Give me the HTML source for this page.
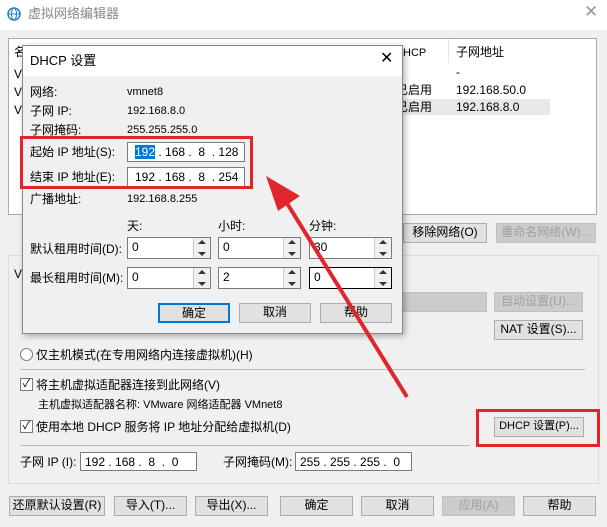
<!DOCTYPE html><html><head><meta charset="utf-8"><style>
*{box-sizing:border-box;margin:0;padding:0}
body{width:607px;height:527px;background:#f0f0f0;font:12px/16px "Liberation Sans","Noto Sans CJK SC",sans-serif;color:#000;position:relative;overflow:hidden}
.a{position:absolute;white-space:nowrap;line-height:16px}
.btn{position:absolute;background:#e1e1e1;border:1px solid #adadad;text-align:center;line-height:17px;white-space:nowrap;overflow:hidden}
.dis{color:#a0a0a0;background:#ccc;border-color:#bfbfbf}
.inp{position:absolute;background:#fff;border:1px solid #7a7a7a;line-height:18px;padding-left:4px;white-space:pre}
.rb{position:absolute;border:1px solid #7a7a7a}
.spin{position:absolute;width:17px;background:#f0f0f0;border-left:1px solid #ccc;right:0;top:0;bottom:0}
.spin:before,.spin:after{content:"";position:absolute;left:4px;border:4px solid transparent}
.spin:before{top:2px;border-bottom:4px solid #333;border-top:0}
.spin:after{bottom:2px;border-top:4px solid #333;border-bottom:0}
</style></head><body>
<div class="a" style="left:0;top:0;width:607px;height:30px;background:#fff"></div>
<svg class="a" style="left:7px;top:7px" width="14" height="14" viewBox="0 0 14 14"><circle cx="7" cy="7" r="6" fill="none" stroke="#1e7fc8" stroke-width="1.5"/><ellipse cx="7" cy="7" rx="2.5" ry="6" fill="none" stroke="#1e7fc8"/><line x1="1" y1="7" x2="13" y2="7" stroke="#1e7fc8"/></svg>
<div class="a" style="left:28px;top:6px;color:#888;font-size:13px">虚拟网络编辑器</div>
<div class="a" style="left:584px;top:4px;color:#999;font-size:17px">✕</div>
<div class="a" style="left:8px;top:38px;width:589px;height:177px;background:#fff;border:1px solid #aaa"></div>
<div class="a" style="left:398px;top:99px;width:152px;height:16px;background:#e8e8e8"></div>
<div class="a" style="left:403px;top:45px;font-size:11px">HCP</div><div class="a" style="left:456px;top:44px">子网地址</div>
<div class="a" style="left:456px;top:64px">-</div>
<div class="a" style="left:396px;top:82px">已启用</div><div class="a" style="left:456px;top:82px">192.168.50.0</div>
<div class="a" style="left:396px;top:99px">已启用</div><div class="a" style="left:456px;top:99px">192.168.8.0</div>
<div class="a" style="left:448px;top:39px;width:1px;height:24px;background:#e5e5e5"></div>
<div class="btn" style="left:403px;top:223px;width:84px;height:20px">移除网络(O)</div>
<div class="btn dis" style="left:496px;top:223px;width:100px;height:20px">重命名网络(W)...</div>
<div class="a" style="left:8px;top:255px;width:591px;height:229px;border:1px solid #dcdcdc"></div>
<div class="a" style="left:400px;top:292px;width:87px;height:20px;background:#ccc;border:1px solid #bfbfbf"></div>
<div class="btn dis" style="left:494px;top:292px;width:89px;height:20px">自动设置(U)...</div>
<div class="btn" style="left:494px;top:320px;width:89px;height:20px">NAT 设置(S)...</div>
<div class="rb" style="left:20px;top:348px;width:13px;height:13px;border-radius:50%;background:#fff"></div>
<div class="a" style="left:36px;top:347px">仅主机模式(在专用网络内连接虚拟机)(H)</div>
<div class="a" style="left:20px;top:369px;width:565px;height:1px;background:#bbb"></div>
<div class="rb" style="left:20px;top:378px;width:13px;height:13px;background:#fff;font-size:11px;line-height:11px;text-align:center">✓</div>
<div class="a" style="left:36px;top:377px">将主机虚拟适配器连接到此网络(V)</div>
<div class="a" style="left:38px;top:397px;font-size:11px">主机虚拟适配器名称: VMware 网络适配器 VMnet8</div>
<div class="rb" style="left:20px;top:420px;width:13px;height:13px;background:#fff;font-size:11px;line-height:11px;text-align:center">✓</div>
<div class="a" style="left:36px;top:419px">使用本地 DHCP 服务将 IP 地址分配给虚拟机(D)</div>
<div class="btn" style="left:494px;top:417px;width:90px;height:20px;font-size:11px">DHCP 设置(P)...</div>
<div class="a" style="left:476px;top:409px;width:124px;height:38px;border:3px solid #e0252b"></div>
<div class="a" style="left:20px;top:445px;width:450px;height:1px;background:#bbb"></div>
<div class="a" style="left:20px;top:454px">子网 IP (I):</div>
<div class="inp" style="left:80px;top:452px;width:117px;height:19px">192 . 168 .  8  .  0</div>
<div class="a" style="left:223px;top:454px">子网掩码(M):</div>
<div class="inp" style="left:295px;top:452px;width:117px;height:19px">255 . 255 . 255 .  0</div>
<div class="btn" style="left:9px;top:496px;width:96px;height:20px">还原默认设置(R)</div>
<div class="btn" style="left:114px;top:496px;width:73px;height:20px">导入(T)...</div>
<div class="btn" style="left:195px;top:496px;width:73px;height:20px">导出(X)...</div>
<div class="btn" style="left:280px;top:496px;width:73px;height:20px">确定</div>
<div class="btn" style="left:361px;top:496px;width:73px;height:20px">取消</div>
<div class="btn dis" style="left:442px;top:496px;width:73px;height:20px">应用(A)</div>
<div class="btn" style="left:523px;top:496px;width:73px;height:20px">帮助</div>
<div class="a" style="left:14px;top:44px">名</div>
<div class="a" style="left:14px;top:66px">V</div><div class="a" style="left:14px;top:84px">V</div><div class="a" style="left:14px;top:102px">V</div>
<div class="a" style="left:14px;top:266px">V</div>
<!-- dialog -->
<div class="a" style="left:22px;top:45px;width:381px;height:289px;background:#f0f0f0;border:1px solid #888;box-shadow:2px 2px 6px rgba(0,0,0,.3)"></div>
<div class="a" style="left:23px;top:46px;width:379px;height:30px;background:#fff"></div>
<div class="a" style="left:30px;top:53px;font-size:13px">DHCP 设置</div>
<div class="a" style="left:380px;top:51px;font-size:16px">✕</div>
<div class="a" style="left:30px;top:84px">网络:</div><div class="a" style="left:127px;top:84px;font-size:11px">vmnet8</div>
<div class="a" style="left:30px;top:103px">子网 IP:</div><div class="a" style="left:127px;top:103px;font-size:11px">192.168.8.0</div>
<div class="a" style="left:30px;top:122px">子网掩码:</div><div class="a" style="left:127px;top:122px;font-size:11px">255.255.255.0</div>
<div class="a" style="left:30px;top:144px">起始 IP 地址(S):</div>
<div class="inp" style="left:127px;top:142px;width:118px;height:20px;padding-left:7px"><span style="background:#0078d7;color:#fff">192</span> . 168 .  8  . 128</div>
<div class="a" style="left:30px;top:169px">结束 IP 地址(E):</div>
<div class="inp" style="left:127px;top:167px;width:118px;height:20px;padding-left:7px">192 . 168 .  8  . 254</div>
<div class="a" style="left:20px;top:136px;width:233px;height:53px;border:3px solid #e0252b"></div>
<div class="a" style="left:30px;top:191px">广播地址:</div><div class="a" style="left:127px;top:191px;font-size:11px">192.168.8.255</div>
<div class="a" style="left:127px;top:218px">天:</div><div class="a" style="left:218px;top:218px">小时:</div><div class="a" style="left:309px;top:218px">分钟:</div>
<div class="a" style="left:30px;top:241px">默认租用时间(D):</div>
<div class="a" style="left:30px;top:270px">最长租用时间(M):</div>
<div class="inp" style="left:127px;top:237px;width:84px;height:22px">0<div class="spin"></div></div>
<div class="inp" style="left:218px;top:237px;width:83px;height:22px">0<div class="spin"></div></div>
<div class="inp" style="left:309px;top:237px;width:83px;height:22px">30<div class="spin"></div></div>
<div class="inp" style="left:127px;top:267px;width:84px;height:22px">0<div class="spin"></div></div>
<div class="inp" style="left:218px;top:267px;width:83px;height:22px">2<div class="spin"></div></div>
<div class="inp" style="left:309px;top:267px;width:83px;height:22px;border-color:#000">0<div class="spin"></div></div>
<div class="btn" style="left:158px;top:303px;width:72px;height:20px;border:2px solid #0078d7;line-height:16px">确定</div>
<div class="btn" style="left:239px;top:303px;width:72px;height:20px">取消</div>
<div class="btn" style="left:320px;top:303px;width:72px;height:20px">帮助</div>
<svg class="a" style="left:0;top:0" width="607" height="527"><line x1="407" y1="397" x2="285" y2="200" stroke="#e0252b" stroke-width="4"/><polygon points="266,176 300,196 278,211" fill="#e0252b"/></svg>
</body></html>
